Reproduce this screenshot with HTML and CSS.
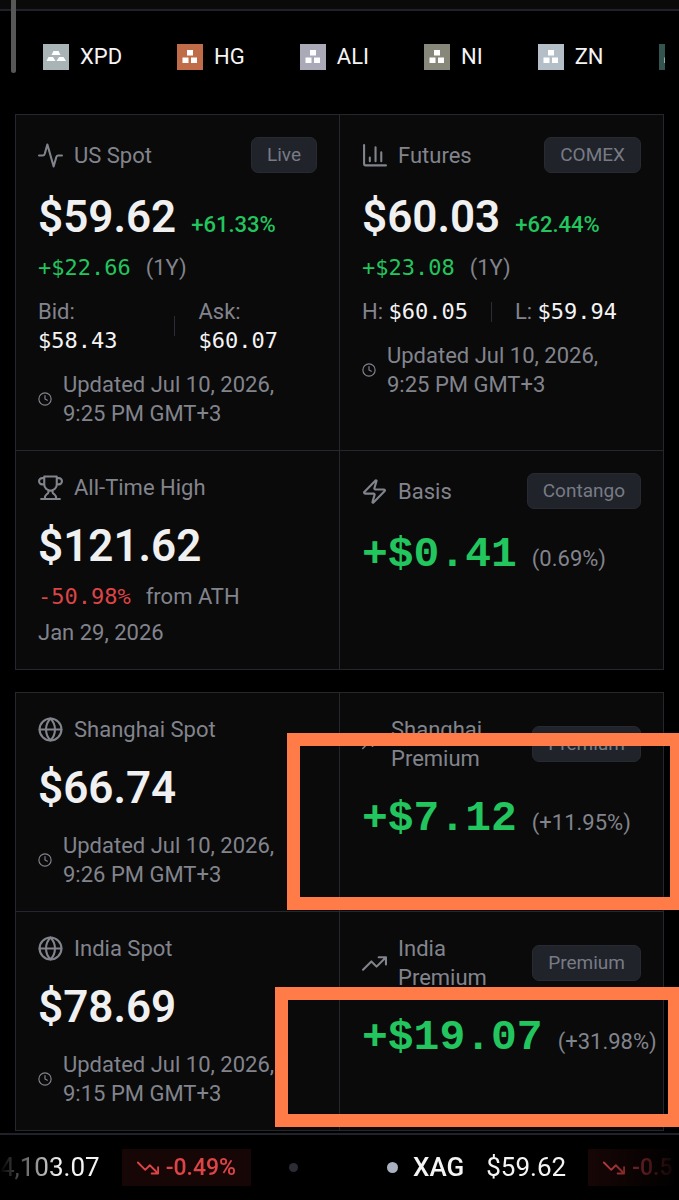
FILE: index.html
```html
<!DOCTYPE html>
<html lang="en">
<head>
    <meta charset="UTF-8">
    <meta name="viewport" content="width=device-width, initial-scale=1.0">
    <title>Silver Spot Price</title>
    <link rel="stylesheet" href="styles.css">
</head>
<body>

    <!-- Shared icons -->
    <svg class="sprite" aria-hidden="true">
        <symbol id="cubes" viewBox="0 0 26 26">
            <path d="M10 6h6v5.500h-6zM5.500 13.500h6v5.500h-6zM14 13.500h6v5.500h-6z"/>
        </symbol>
        <symbol id="clock" viewBox="0 0 24 24">
            <circle cx="12" cy="12" r="10.500"/>
            <path d="M12 6v6l4 2"/>
        </symbol>
        <symbol id="globe" viewBox="0 0 24 24">
            <circle cx="12" cy="12" r="10.500"/>
            <path d="M12 1.500a15 15 0 0 0 0 21 15 15 0 0 0 0-21M1.500 12h21"/>
        </symbol>
        <symbol id="trend-up" viewBox="0 0 24 24">
            <path d="M16 6h7v7M23 6l-9 9-5-5-8 8"/>
        </symbol>
        <symbol id="trend-down" viewBox="0 0 24 24">
            <path d="M16 18h7v-7M23 18l-9-9-5 5-8-8"/>
        </symbol>
    </svg>

    <div class="page">
        <div class="scroll-thumb"></div>
        <div class="topbar"></div>

        <!-- Metal tabs -->
        <nav class="tabs">
            <button class="tab" type="button">
                <svg class="tab-icon xpd" viewBox="0 0 26 26"><path d="M10.500 7h5l2 4h-9zM5.500 13h4.500l2.500 4h-9zM16 13h4.500l2.500 4h-9.500z"/></svg>
                XPD
            </button>
            <button class="tab" type="button"><svg class="tab-icon hg"><use href="#cubes"/></svg>HG</button>
            <button class="tab" type="button"><svg class="tab-icon ali"><use href="#cubes"/></svg>ALI</button>
            <button class="tab" type="button"><svg class="tab-icon ni"><use href="#cubes"/></svg>NI</button>
            <button class="tab" type="button"><svg class="tab-icon zn"><use href="#cubes"/></svg>ZN</button>
            <button class="tab" type="button" aria-label="More metals"><svg class="tab-icon more"><use href="#cubes"/></svg></button>
        </nav>

        <main>
            <!-- Spot, futures, high and basis -->
            <section class="panel">
                <article class="card">
                    <header class="card-head">
                        <svg class="icon" viewBox="0 0 24 24"><path d="M23 12h-3.500a2 2 0 0 0-1.900 1.400L15 22.500 9 1.500 6.400 10.600A2 2 0 0 1 4.500 12H1"/></svg>
                        <h2>US Spot</h2>
                        <span class="badge">Live</span>
                    </header>
                    <p class="price-row"><strong class="price">$59.62</strong> <span class="up">+61.33%</span></p>
                    <p class="change"><span class="mono up">+$22.66</span> (1Y)</p>
                    <div class="quotes">
                        <p>Bid: <b class="mono">$58.43</b></p>
                        <span class="divider"></span>
                        <p>Ask: <b class="mono">$60.07</b></p>
                    </div>
                    <p class="updated"><svg class="clock"><use href="#clock"/></svg><span>Updated Jul 10, 2026, 9:25 PM GMT+3</span></p>
                </article>

                <article class="card">
                    <header class="card-head">
                        <svg class="icon" viewBox="0 0 24 24"><path d="M2 2v18a1.500 1.500 0 0 0 1.500 1.500H23M7.500 14v3.500M13 4v13.500M18.500 9v8.500"/></svg>
                        <h2>Futures</h2>
                        <span class="badge">COMEX</span>
                    </header>
                    <p class="price-row"><strong class="price">$60.03</strong> <span class="up">+62.44%</span></p>
                    <p class="change"><span class="mono up">+$23.08</span> (1Y)</p>
                    <div class="quotes">
                        <p>H: <b class="mono">$60.05</b></p>
                        <span class="divider"></span>
                        <p>L: <b class="mono">$59.94</b></p>
                    </div>
                    <p class="updated"><svg class="clock"><use href="#clock"/></svg><span>Updated Jul 10, 2026, 9:25 PM GMT+3</span></p>
                </article>

                <article class="card">
                    <header class="card-head">
                        <svg class="icon" viewBox="0 0 24 24"><path d="M6 9H4a3 3 0 0 1 0-6h2M18 9h2a3 3 0 0 0 0-6h-2M6 1.500h12V9a6 6 0 0 1-12 0zM3 23h18M10 14.500v2c0 1-1 1.500-1.700 2C7 19.500 6.500 21 6.500 23M14 14.500v2c0 1 1 1.500 1.700 2 1.300 1 1.800 2.500 1.800 4.500"/></svg>
                        <h2>All-Time High</h2>
                    </header>
                    <p class="price-row"><strong class="price">$121.62</strong></p>
                    <p class="change"><span class="mono down">-50.98%</span> from ATH</p>
                    <p class="date">Jan 29, 2026</p>
                </article>

                <article class="card">
                    <header class="card-head">
                        <svg class="icon" viewBox="0 0 24 24"><path d="M3 14a1 1 0 0 1-.8-1.600L13 1.500a.5.5 0 0 1 .9.500L12 8.500A1 1 0 0 0 13 10h8a1 1 0 0 1 .8 1.600L11 22.500a.5.5 0 0 1-.9-.500L12 15.500A1 1 0 0 0 11 14z"/></svg>
                        <h2>Basis</h2>
                        <span class="badge">Contango</span>
                    </header>
                    <p class="price-row"><strong class="price price-mono up">+$0.41</strong> <span>(0.69%)</span></p>
                </article>
            </section>

            <!-- Regional prices -->
            <section class="panel">
                <article class="card">
                    <header class="card-head">
                        <svg class="icon"><use href="#globe"/></svg>
                        <h2>Shanghai Spot</h2>
                    </header>
                    <p class="price-row"><strong class="price">$66.74</strong></p>
                    <p class="updated"><svg class="clock"><use href="#clock"/></svg><span>Updated Jul 10, 2026, 9:26 PM GMT+3</span></p>
                </article>

                <article class="card">
                    <header class="card-head">
                        <svg class="icon icon-small"><use href="#trend-up"/></svg>
                        <h2>Shanghai Premium</h2>
                        <span class="badge">Premium</span>
                    </header>
                    <p class="price-row"><strong class="price price-mono up">+$7.12</strong> <span>(+11.95%)</span></p>
                </article>

                <article class="card">
                    <header class="card-head">
                        <svg class="icon"><use href="#globe"/></svg>
                        <h2>India Spot</h2>
                    </header>
                    <p class="price-row"><strong class="price">$78.69</strong></p>
                    <p class="updated"><svg class="clock"><use href="#clock"/></svg><span>Updated Jul 10, 2026, 9:15 PM GMT+3</span></p>
                </article>

                <article class="card">
                    <header class="card-head">
                        <svg class="icon"><use href="#trend-up"/></svg>
                        <h2>India Premium</h2>
                        <span class="badge">Premium</span>
                    </header>
                    <p class="price-row"><strong class="price price-mono up">+$19.07</strong> <span>(+31.98%)</span></p>
                </article>

                <div class="highlight highlight-shanghai"></div>
                <div class="highlight highlight-india"></div>
            </section>
        </main>

        <!-- Ticker -->
        <footer class="ticker">
            <div class="ticker-item">
                <span>4,103.07</span>
                <span class="ticker-change"><svg><use href="#trend-down"/></svg>-0.49%</span>
            </div>
            <span class="separator"></span>
            <div class="ticker-item">
                <span class="ticker-name">XAG</span>
                <span>$59.62</span>
                <span class="ticker-change"><svg><use href="#trend-down"/></svg>-0.5</span>
            </div>
        </footer>
    </div>

</body>
</html>
```
FILE: styles.css
```css
/* General Reset */
* {
    margin: 0;
    padding: 0;
    box-sizing: border-box;
}

body {
    font-family: Roboto, "Liberation Sans", sans-serif;
    font-size: 22px;
    line-height: 29px;
    background-color: #000;
    color: #82848d;
}

.sprite {
    display: none;
}

.page {
    position: relative;
    overflow: hidden;
}

.scroll-thumb {
    position: absolute;
    top: 0;
    left: 11px;
    width: 5px;
    height: 73px;
    border-radius: 0 0 3px 3px;
    background-color: #575757;
}

.topbar {
    height: 11px;
    background-color: #0a0a0b;
    border-bottom: 2px solid #212229;
}

/* Tabs */
.tabs {
    display: flex;
    gap: 55px;
    margin: 0 14px 22px 15px;
    padding: 27px 0 17px 28px;
    overflow: hidden;
}

.tab {
    display: flex;
    flex: none;
    align-items: center;
    gap: 11px;
    height: 37px;
    border: none;
    background: none;
    color: #f4f4f5;
    font: inherit;
}

.tab-icon {
    width: 26px;
    height: 26px;
    fill: #fff;
}

.xpd {
    background-color: #a9b4b6;
}

.hg {
    background-color: #c06c48;
}

.ali {
    background-color: #a9a9b8;
}

.ni {
    background-color: #88887a;
}

.zn {
    background-color: #b4bec6;
}

.more {
    background-color: #345450;
}

/* Panels */
main {
    padding: 0 15px;
}

.panel {
    position: relative;
    display: grid;
    grid-template-columns: repeat(2, minmax(0, 1fr));
    gap: 1px;
    margin-bottom: 22px;
    border: 1px solid #26272d;
    background-color: #26272d;
}

.panel:last-child {
    margin-bottom: 2px;
}

.card {
    padding: 22px;
    background-color: #0a0a0a;
}

.card-head {
    display: flex;
    align-items: center;
    gap: 11px;
    margin-bottom: 15px;
}

.card-head h2 {
    flex: 1;
    font-size: 22px;
    font-weight: 400;
}

.icon {
    flex: none;
    width: 25px;
    height: 25px;
}

.icon-small {
    width: 18px;
    height: 18px;
}

.icon,
.clock,
.ticker-change svg {
    fill: none;
    stroke: currentColor;
    stroke-width: 2;
    stroke-linecap: round;
    stroke-linejoin: round;
}

.badge {
    flex: none;
    padding: 3px 15px;
    border: 1px solid #272a32;
    border-radius: 7px;
    background-color: #20232a;
    color: #777b85;
    font-size: 19px;
    line-height: 28px;
}

/* Prices */
.price-row {
    display: flex;
    align-items: baseline;
    gap: 15px;
    white-space: nowrap;
}

.price {
    color: #f0f0f1;
    font-size: 44px;
    font-weight: 600;
    line-height: 58px;
}

.price-mono {
    font-family: "Liberation Mono", monospace;
    font-size: 43px;
    font-weight: 700;
    line-height: 62px;
}

.mono {
    font-family: "DejaVu Sans Mono", "Liberation Mono", monospace;
    line-height: 22px;
}

.up,
.price.up {
    color: #22c55e;
}

.price-row span.up {
    font-weight: 500;
}

.down {
    color: #dc4446;
}

.change {
    display: flex;
    align-items: baseline;
    gap: 15px;
    margin-top: 7px;
}

.date {
    margin-top: 7px;
}

.quotes {
    display: flex;
    align-items: center;
    gap: 23px;
    margin-top: 15px;
}

.quotes b {
    color: #f4f4f5;
    font-weight: 400;
}

.divider {
    flex: none;
    width: 1px;
    height: 20px;
    background-color: #2c2d33;
}

.updated {
    display: flex;
    align-items: center;
    gap: 11px;
    margin-top: 15px;
}

.price-row + .updated {
    margin-top: 14px;
}

.clock {
    flex: none;
    width: 14px;
    height: 14px;
}

/* Highlight boxes */
.highlight {
    position: absolute;
    border: 13px solid #ff7b47;
}

.highlight-shanghai {
    top: 40px;
    left: 271px;
    right: -20px;
    height: 177px;
}

.highlight-india {
    top: 294px;
    left: 259px;
    right: -18px;
    height: 140px;
}

/* Ticker */
.ticker {
    display: flex;
    align-items: center;
    height: 67px;
    border-top: 2px solid #212229;
    color: #f4f4f5;
    font-size: 26px;
    white-space: nowrap;
    overflow: hidden;
}

.ticker-item {
    display: flex;
    flex: none;
    align-items: center;
    gap: 22px;
}

.ticker-item:first-child {
    -webkit-mask-image: linear-gradient(to right, transparent, #000 60px);
    mask-image: linear-gradient(to right, transparent, #000 60px);
}

.ticker-item:last-child {
    flex: 1;
    min-width: 0;
    -webkit-mask-image: linear-gradient(to left, transparent, #000 90px);
    mask-image: linear-gradient(to left, transparent, #000 90px);
}

.ticker-name {
    display: flex;
    align-items: center;
    gap: 15px;
    font-weight: 500;
}

.ticker-name::before {
    content: "";
    width: 11px;
    height: 11px;
    border-radius: 50%;
    background-color: #a9b0bf;
}

.ticker-change {
    display: flex;
    flex: none;
    align-items: center;
    gap: 7px;
    padding: 4px 15px;
    background-color: #170606;
    color: #dc4446;
    font-size: 23px;
    font-weight: 500;
}

.ticker-change svg {
    width: 22px;
    height: 22px;
}

.ticker-item:last-child .ticker-change {
    flex: 1;
}

.separator {
    flex: none;
    width: 9px;
    height: 9px;
    margin: 0 89px 0 38px;
    border-radius: 50%;
    background-color: #2b2c35;
}
```
